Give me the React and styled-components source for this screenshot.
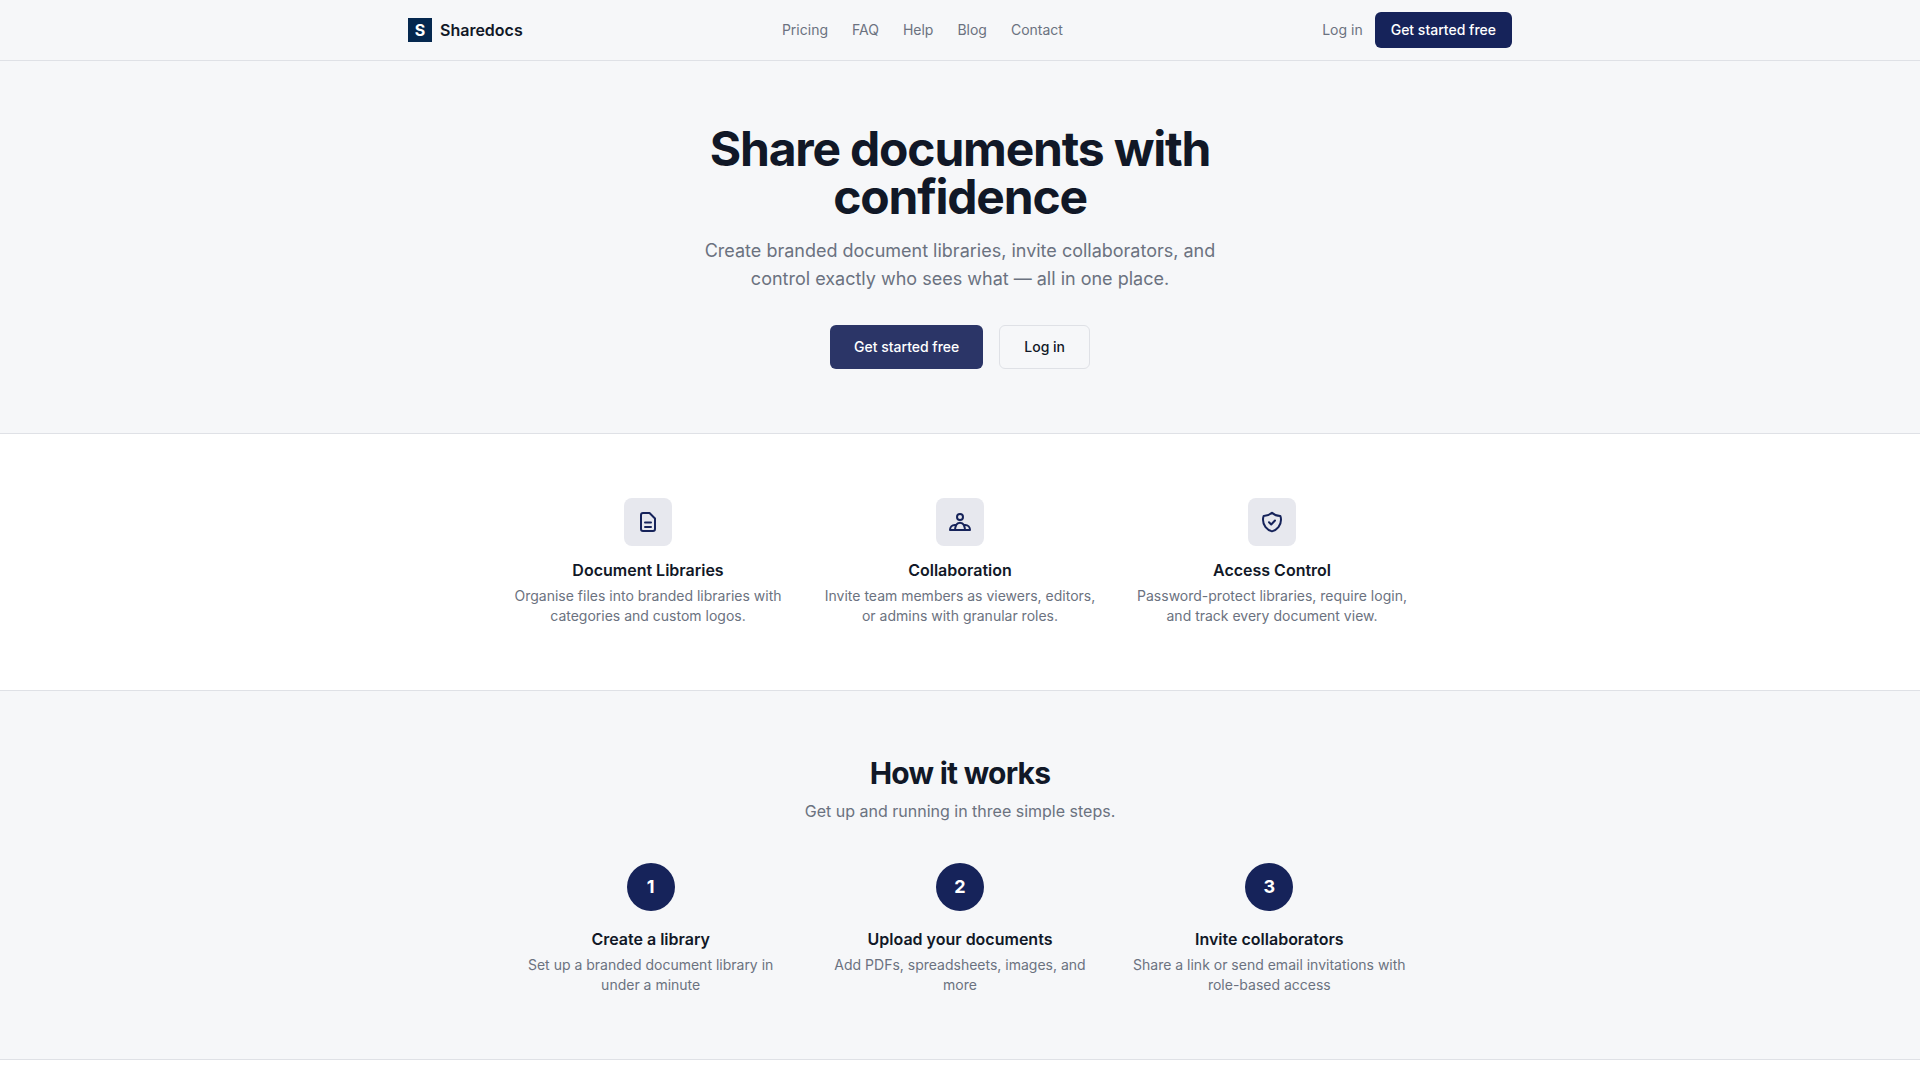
import React from 'react'
import styled, { createGlobalStyle } from 'styled-components'

const GlobalStyle = createGlobalStyle`
  * {
    box-sizing: border-box;
  }
  body {
    margin: 0;
    background: #fff;
    color: #111827;
    font-family: "Inter", "Liberation Sans", sans-serif;
  }
  h1, h2, h3, p {
    margin: 0;
  }
`

const Header = styled.header`
  background: #f6f7f9;
  border-bottom: 1px solid #dfe1e6;
`

const HeaderInner = styled.div`
  max-width: 1152px;
  height: 60px;
  margin: 0 auto;
  padding: 0 24px;
  display: flex;
  justify-content: space-between;
  align-items: center;
`

const Brand = styled.a`
  display: flex;
  align-items: center;
  gap: 8px;
  font-size: 16px;
  line-height: 24px;
  font-weight: 600;
  color: #111827;
`

const BrandMark = styled.span`
  width: 24px;
  height: 24px;
  background: #04274f;
  color: #fff;
  font-size: 16px;
  line-height: 24px;
  font-weight: 700;
  text-align: center;
`

const Nav = styled.nav`
  display: flex;
  gap: 24px;
`

const NavLink = styled.a`
  font-size: 14px;
  line-height: 20px;
  color: #6b7280;
`

const HeaderActions = styled.div`
  display: flex;
  align-items: center;
  gap: 12px;
`

const SmallButton = styled.a`
  padding: 8px 16px;
  border-radius: 6px;
  background: #16235a;
  color: #fff;
  font-size: 14px;
  line-height: 20px;
  font-weight: 500;
`

const Hero = styled.section`
  background: #f6f7f9;
  border-bottom: 1px solid #dfe1e6;
  padding: 64px 24px;
  text-align: center;
`

const HeroTitle = styled.h1`
  max-width: 672px;
  margin: 0 auto 16px;
  font-size: 48px;
  line-height: 48px;
  font-weight: 700;
  letter-spacing: -1.2px;
`

const HeroText = styled.p`
  max-width: 560px;
  margin: 0 auto 32px;
  font-size: 18px;
  line-height: 28px;
  color: #6b7280;
`

const HeroActions = styled.div`
  display: flex;
  justify-content: center;
  gap: 16px;
`

const HeroButton = styled.a`
  height: 44px;
  padding: 0 24px;
  display: flex;
  align-items: center;
  border-radius: 6px;
  font-size: 14px;
  line-height: 20px;
  font-weight: 500;
  color: ${(p) => (p.$primary ? '#fff' : '#111827')};
  background: ${(p) => (p.$primary ? '#2b3567' : 'transparent')};
  border: ${(p) => (p.$primary ? 'none' : '1px solid #dfe1e6')};
`

const Features = styled.section`
  background: #fff;
  border-bottom: 1px solid #dfe1e6;
  padding: 64px 24px;
`

const FeatureGrid = styled.div`
  max-width: 896px;
  margin: 0 auto;
  display: grid;
  grid-template-columns: repeat(3, 1fr);
  gap: 40px;
`

const Feature = styled.div`
  text-align: center;
`

const IconBox = styled.div`
  width: 48px;
  height: 48px;
  margin: 0 auto 12px;
  border-radius: 8px;
  background: #e7e8ee;
  color: #16235a;
  display: flex;
  align-items: center;
  justify-content: center;
`

const ItemTitle = styled.h3`
  margin-bottom: 4px;
  font-size: 16px;
  line-height: 24px;
  font-weight: 600;
`

const ItemText = styled.p`
  font-size: 14px;
  line-height: 20px;
  color: #6b7280;
`

const Steps = styled.section`
  background: #f6f7f9;
  border-bottom: 1px solid #dfe1e6;
  padding: 64px 24px;
  text-align: center;
`

const StepsTitle = styled.h2`
  margin-bottom: 8px;
  font-size: 30px;
  line-height: 36px;
  font-weight: 700;
  letter-spacing: -0.75px;
`

const StepsText = styled.p`
  margin-bottom: 40px;
  font-size: 16px;
  line-height: 24px;
  color: #6b7280;
`

const StepGrid = styled.div`
  max-width: 896px;
  margin: 0 auto;
  display: grid;
  grid-template-columns: repeat(3, 1fr);
  gap: 32px;
`

const StepNumber = styled.div`
  width: 48px;
  height: 48px;
  margin: 0 auto 16px;
  border-radius: 50%;
  background: #16235a;
  color: #fff;
  font-size: 18px;
  line-height: 28px;
  font-weight: 700;
  display: flex;
  align-items: center;
  justify-content: center;
`

const Footer = styled.footer`
  background: #fff;
  height: 20px;
`

const Icon = ({ children }) => (
  <svg width="24" height="24" viewBox="0 0 24 24" fill="none" stroke="currentColor" strokeWidth="2" strokeLinecap="round" strokeLinejoin="round">
    {children}
  </svg>
)

const features = [
  {
    title: 'Document Libraries',
    text: 'Organise files into branded libraries with categories and custom logos.',
    icon: (
      <Icon>
        <path d="M7 3h6.500L19 8.500V19a2 2 0 0 1-2 2H7a2 2 0 0 1-2-2V5a2 2 0 0 1 2-2z" />
        <path d="M9 12.500h6M9 17h6" />
      </Icon>
    ),
  },
  {
    title: 'Collaboration',
    text: 'Invite team members as viewers, editors, or admins with granular roles.',
    icon: (
      <Icon>
        <circle cx="12" cy="7" r="3" />
        <path d="M2 20h20c0-2.800-2-5-4.800-5-.4 0-.8 0-1.200.1-1-1.600-2.400-2.300-4-2.300s-3 .7-4 2.300c-.4-.1-.8-.1-1.200-.1C4 15 2 17.200 2 20z" />
        <path d="M8 15.500C7.300 17 7 18.500 7 20M16 15.500c.7 1.500 1 3 1 4.500" />
      </Icon>
    ),
  },
  {
    title: 'Access Control',
    text: 'Password-protect libraries, require login, and track every document view.',
    icon: (
      <Icon>
        <path d="M12 2.700A12 12 0 0 1 3.600 6 12 12 0 0 0 3 9.750c0 5.600 3.800 10.300 9 11.620 5.200-1.320 9-6 9-11.620 0-1.300-.2-2.570-.6-3.750h-.15c-3.200 0-6.100-1.250-8.250-3.300z" />
        <path d="M9 12.300l2.200 2.200 3.800-4" />
      </Icon>
    ),
  },
]

const steps = [
  { title: 'Create a library', text: 'Set up a branded document library in under a minute' },
  { title: 'Upload your documents', text: 'Add PDFs, spreadsheets, images, and more' },
  { title: 'Invite collaborators', text: 'Share a link or send email invitations with role-based access' },
]

const App = () => {
  return (
    <>
      <GlobalStyle />
      <Header>
        <HeaderInner>
          <Brand>
            <BrandMark>S</BrandMark>
            Sharedocs
          </Brand>
          <Nav>
            {['Pricing', 'FAQ', 'Help', 'Blog', 'Contact'].map((item) => (
              <NavLink key={item}>{item}</NavLink>
            ))}
          </Nav>
          <HeaderActions>
            <NavLink>Log in</NavLink>
            <SmallButton>Get started free</SmallButton>
          </HeaderActions>
        </HeaderInner>
      </Header>

      <Hero>
        <HeroTitle>Share documents with confidence</HeroTitle>
        <HeroText>
          Create branded document libraries, invite collaborators, and control exactly who sees what — all in one place.
        </HeroText>
        <HeroActions>
          <HeroButton $primary>Get started free</HeroButton>
          <HeroButton>Log in</HeroButton>
        </HeroActions>
      </Hero>

      <Features>
        <FeatureGrid>
          {features.map((f) => (
            <Feature key={f.title}>
              <IconBox>{f.icon}</IconBox>
              <ItemTitle>{f.title}</ItemTitle>
              <ItemText>{f.text}</ItemText>
            </Feature>
          ))}
        </FeatureGrid>
      </Features>

      <Steps>
        <StepsTitle>How it works</StepsTitle>
        <StepsText>Get up and running in three simple steps.</StepsText>
        <StepGrid>
          {steps.map((s, i) => (
            <div key={s.title}>
              <StepNumber>{i + 1}</StepNumber>
              <ItemTitle>{s.title}</ItemTitle>
              <ItemText>{s.text}</ItemText>
            </div>
          ))}
        </StepGrid>
      </Steps>

      <Footer />
    </>
  )
}

export default App
